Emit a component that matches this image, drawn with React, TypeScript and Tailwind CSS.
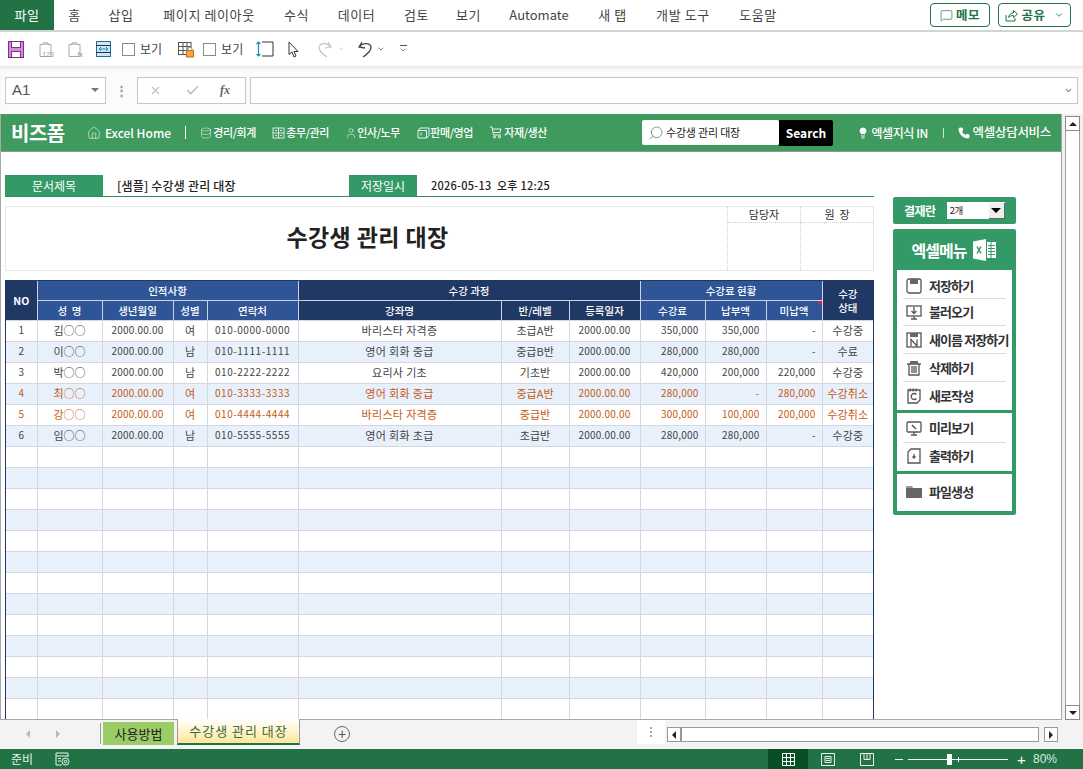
import { Home, Database, User, Search, Lightbulb, Phone, MessageSquare, X, Check, ChevronDown } from 'lucide-react';

const KR = "font-['Noto_Sans_CJK_KR','Noto_Sans',sans-serif]";

const tabs = [
  ['홈', 'ml-[15px] w-[11px]'],
  ['삽입', 'ml-[29px] w-[24px]'],
  ['페이지 레이아웃', 'ml-[28px] w-[96px]'],
  ['수식', 'ml-[27px] w-[25px]'],
  ['데이터', 'ml-[29px] w-[37px]'],
  ['검토', 'ml-[29px] w-[25px]'],
  ['보기', 'ml-[27px] w-[25px]'],
  ['Automate', 'ml-[29px] w-[58px] !tracking-normal'],
  ['새 탭', 'ml-[30px] w-[29px]'],
  ['개발 도구', 'ml-[28px] w-[56px]'],
  ['도움말', 'ml-[28px] w-[38px]'],
];

const rows = [
  ['1', '김○○', '2000.00.00', '여', '010-0000-0000', '바리스타 자격증', '초급A반', '2000.00.00', '350,000', '350,000', '-', '수강중'],
  ['2', '이○○', '2000.00.00', '남', '010-1111-1111', '영어 회화 중급', '중급B반', '2000.00.00', '280,000', '280,000', '-', '수료'],
  ['3', '박○○', '2000.00.00', '남', '010-2222-2222', '요리사 기초', '기초반', '2000.00.00', '420,000', '200,000', '220,000', '수강중'],
  ['4', '최○○', '2000.00.00', '여', '010-3333-3333', '영어 회화 중급', '중급A반', '2000.00.00', '280,000', '-', '280,000', '수강취소'],
  ['5', '강○○', '2000.00.00', '여', '010-4444-4444', '바리스타 자격증', '중급반', '2000.00.00', '300,000', '100,000', '200,000', '수강취소'],
  ['6', '임○○', '2000.00.00', '남', '010-5555-5555', '영어 회화 초급', '초급반', '2000.00.00', '280,000', '280,000', '-', '수강중'],
  ...Array.from({ length: 13 }, () => ['', '', '', '', '', '', '', '', '', '', '', '']),
];

// per column text style of the body cells
const cellText = [
  'text-center',
  'text-center text-[11px]',
  'text-center tracking-[0.2px]',
  'text-center text-[11px]',
  'text-center tracking-[0.55px]',
  'text-center text-[11px] tracking-[0.35px]',
  'text-center text-[11px]',
  'text-center tracking-[0.2px]',
  'text-right pr-[6px] tracking-[0.2px]',
  'text-right pr-[6px] tracking-[0.2px]',
  'text-right pr-[6px] tracking-[0.2px]',
  'text-center text-[11px] tracking-[0.2px]',
];

function Doc({ label }: { label: string }) {
  return (
    <svg width="16" height="17" viewBox="0 0 16 17" fill="none">
      <path d="M2 3.500h3V2h5v1.500h3v12H2z" stroke="#a8a8a8" />
      <rect x="5" y="1" width="5" height="3" fill="#c8c8c8" />
      <text x="16" y="16" textAnchor="end" fontSize="7" fill="#9a9a9a" fontFamily="Liberation Sans, sans-serif">{label}</text>
    </svg>
  );
}

function NavGrid() {
  return (
    <svg className="shrink-0" width="13" height="12" viewBox="0 0 13 12" fill="none" stroke="white" strokeWidth="0.8">
      <rect x="1" y="1" width="11" height="10" />
      <path d="M6.500 1v10M1 6h11M3 3.500h2M8 3.500h2M3 8.500h2M8 8.500h2" />
    </svg>
  );
}

function NavBox() {
  return (
    <svg className="shrink-0" width="13" height="12" viewBox="0 0 13 12" fill="none" stroke="white" strokeWidth="0.9">
      <path d="M1 3.500h8.500v7.500H1zM1 3.500 3 1h9v7.500l-2.500 2.500M4 5.500v3" />
    </svg>
  );
}

function NavCart() {
  return (
    <svg className="shrink-0" width="14" height="13" viewBox="0 0 14 13" fill="none" stroke="white" strokeWidth="0.9">
      <path d="M1 1h2l1.500 8h7.500M4 3h8l-1 3.500H4.500" />
      <circle cx="5.500" cy="11" r="1" />
      <circle cx="10.500" cy="11" r="1" />
    </svg>
  );
}

function NavItem({ icon, label, className }: any) {
  return (
    <div className={`flex items-center justify-between font-medium text-white whitespace-nowrap ${className}`}>
      {icon}
      <span>{label}</span>
    </div>
  );
}

function MenuIcon({ kind }: { kind: string }) {
  const s = { stroke: '#555', strokeWidth: 1.3, fill: 'none' };
  return (
    <svg className="shrink-0" width="18" height="18" viewBox="0 0 18 18">
      {kind === 'save' && (
        <g>
          <rect x="2" y="2" width="14" height="14" rx="2" {...s} />
          <rect x="5" y="2" width="8" height="5" fill="#666" />
        </g>
      )}
      {kind === 'load' && (
        <g>
          <rect x="2" y="3" width="14" height="10" {...s} />
          <path d="M6 16h6M9 13v3M9 4v6M6.500 8 9 10.500 11.500 8" {...s} />
        </g>
      )}
      {kind === 'saveas' && (
        <g>
          <rect x="2" y="2" width="14" height="14" {...s} />
          <rect x="5" y="2" width="8" height="4" fill="#666" />
          <path d="M6 15V8.500L12 15V8.500" {...s} />
        </g>
      )}
      {kind === 'del' && (
        <g>
          <path d="M2 5h14M4 5v11h10V5M7 7v7M9 7v7M11 7v7" {...s} />
          <rect x="5" y="2" width="8" height="3" fill="#666" />
        </g>
      )}
      {kind === 'new' && (
        <g>
          <path d="M3 3h12v10l-3 3H3z" {...s} />
          <path d="M5 1.500v3M8 1.500v3M11 1.500v3M11.500 7.500a3 3 0 1 0 0 4" {...s} />
        </g>
      )}
      {kind === 'view' && (
        <g>
          <rect x="2" y="3" width="14" height="10" rx="1" {...s} />
          <path d="M6 16h6M9 13v3" {...s} />
          <path d="M7 6l4 4" stroke="#555" strokeWidth="1.600" />
        </g>
      )}
      {kind === 'print' && (
        <g>
          <path d="M6 2h9v14H3V5z" {...s} />
          <path d="M9 7v4M7.500 9.500 9 11l1.500-1.500" {...s} />
        </g>
      )}
      {kind === 'file' && (
        <g>
          <path d="M1 3h6l1 2H1z" fill="#9a9a9a" />
          <rect x="1" y="5" width="16" height="10" fill="#666" />
        </g>
      )}
    </svg>
  );
}

function MenuRow({ kind, label, line, className }: any) {
  return (
    <div className={`mx-[6px] flex items-center gap-[6px] pl-[2px] ${line ? 'border-b border-[#dcdcdc]' : ''} ${className}`}>
      <MenuIcon kind={kind} />
      <span className="text-[13px] font-semibold text-[#333] tracking-[-0.9px] whitespace-nowrap">{label}</span>
    </div>
  );
}

export default function App() {
  return (
    <div className={`w-[1083px] h-[769px] overflow-hidden bg-white flex flex-col ${KR}`}>
      {/* ribbon tabs */}
      <div className="h-[32px] shrink-0 flex items-start border-b-2 border-[#d4d4d4] text-[13px] text-[#444]">
        <div className="w-[54px] h-[30px] bg-[#217346] text-white flex items-center justify-center tracking-[0.5px]">파일</div>
        {tabs.map(([t, c]) => (
          <div key={t} className={`h-[30px] flex items-center justify-center whitespace-nowrap tracking-[0.6px] ${c}`}>{t}</div>
        ))}
        <div className="ml-auto mr-[12px] mt-[3px] flex gap-[8px]">
          <div className="w-[60px] h-[24px] border border-[#217346] rounded-[4px] flex items-center justify-center gap-[3px] text-[12.500px] font-bold text-[#217346] tracking-[0.5px]">
            <MessageSquare size={13} strokeWidth={1.300} />메모
          </div>
          <div className="w-[73px] h-[24px] border border-[#217346] rounded-[4px] flex items-center justify-center gap-[3px] text-[12.500px] font-bold text-[#217346] tracking-[0.5px]">
            <svg width="13" height="13" viewBox="0 0 13 13" fill="none" stroke="#217346" strokeWidth="1">
              <path d="M1 6v6h9V9M3.500 8.500C4 5.500 6 4 8.500 4V1.500L12.500 5 8.500 8.500V6.500C6.500 6.500 5 7 3.500 8.500z" />
            </svg>
            공유<ChevronDown size={10} className="ml-[5px]" />
          </div>
        </div>
      </div>

      {/* quick access */}
      <div className="h-[34px] shrink-0 flex items-center pl-[8px] text-[12px] text-[#444]">
        <svg width="16" height="17" viewBox="0 0 16 17">
          <rect x="0.500" y="0.500" width="15" height="16" fill="#d68bd6" stroke="#7b2d8b" />
          <rect x="3.500" y="0.500" width="9" height="6" fill="#fff" stroke="#7b2d8b" />
          <rect x="3.500" y="10.500" width="9" height="6" fill="#fff" stroke="#7b2d8b" />
        </svg>
        <div className="ml-[14px]"><Doc label="123" /></div>
        <div className="ml-[13px]"><Doc label="fx" /></div>
        <svg className="ml-[13px]" width="15" height="16" viewBox="0 0 15 16" fill="none">
          <rect x="0.500" y="0.500" width="14" height="15" fill="#cde6f5" stroke="#1e6e9e" />
          <path d="M0 4.500h15M0 11.500h15" stroke="#333" />
          <path d="M3 8h9M5 6 3 8l2 2M10 6l2 2-2 2" stroke="#1e8bc3" />
        </svg>
        <div className="ml-[11px] w-[13px] h-[13px] border border-[#8a8a8a] bg-white" />
        <span className="ml-[5px]">보기</span>
        <svg className="ml-[15px]" width="17" height="17" viewBox="0 0 17 17" fill="none">
          <path d="M1 1.500h13M1 5.500h13M1 9.500h9M1 13.500h8M1.500 1v13M6 1v13M10 1v8M14 1v6" stroke="#555" />
          <rect x="9.500" y="9.500" width="7" height="6.500" fill="#f0a93c" stroke="#b87414" />
          <path d="M11 9.500V8a2 2 0 0 1 4 0v1.500" stroke="#888" />
        </svg>
        <div className="ml-[9px] w-[13px] h-[13px] border border-[#8a8a8a] bg-white" />
        <span className="ml-[5px]">보기</span>
        <svg className="ml-[13px]" width="18" height="18" viewBox="0 0 18 18" fill="none">
          <path d="M6 2h11v14H6" stroke="#333" />
          <path d="M2.500 2v14M0.500 4l2-2 2 2M0.500 14l2 2 2-2" stroke="#1e8bc3" strokeWidth="1.200" />
        </svg>
        <svg className="ml-[14px]" width="11" height="17" viewBox="0 0 11 17" fill="none" stroke="#333">
          <path d="M1 1v12.500l3-2.500 2 5 2-1-2-4.500h4z" />
        </svg>
        <svg className="ml-[16px]" width="18" height="18" viewBox="0 0 18 18" fill="none" stroke="#c4c4c4" strokeWidth="1.200">
          <path d="M13 2l3 5-6 1M15.500 7C13 3 5 2 4 7c-.500 4 5 8 8 10" />
        </svg>
        <ChevronDown className="ml-[4px] text-[#bdbdbd]" size={8} />
        <svg className="ml-[12px]" width="18" height="18" viewBox="0 0 18 18" fill="none" stroke="#444" strokeWidth="1.300">
          <path d="M5 2 2 7l6 1M2.500 7C5 3 13 2 14 7c.500 4-5 8-8 10" />
        </svg>
        <ChevronDown className="ml-[2px] text-[#444]" size={8} />
        <div className="ml-[14px] flex flex-col items-center gap-[2px]">
          <div className="w-[7px] h-px bg-[#555]" />
          <ChevronDown className="text-[#555] -mt-[2px]" size={8} />
        </div>
      </div>

      {/* formula bar */}
      <div className="h-[48px] shrink-0 bg-[#fbfbfb] border-t border-[#ececec] shadow-[inset_0_2px_2px_#eeeeee] flex items-center pl-[5px] pr-[5px] pb-[1px]">
        <div className="w-[101px] h-[27px] bg-white border border-[#c6c6c6] flex items-center pl-[6px] pr-[6px] text-[15px] text-[#555] font-['Liberation_Sans',sans-serif]">
          A1
          <div className="ml-auto w-0 h-0 border-x-[4px] border-x-transparent border-t-[4px] border-t-[#777]" />
        </div>
        <div className="w-[31px] flex justify-center text-[#999] text-[13px] font-bold">⋮</div>
        <div className="w-[109px] h-[27px] bg-white border border-[#c6c6c6] flex items-center text-[#bdbdbd]">
          <X className="ml-[11px]" size={13} strokeWidth={2} />
          <Check className="ml-[23px]" size={15} strokeWidth={2.500} />
          <span className="ml-[20px] text-[12px] italic font-bold text-[#666] font-['Liberation_Serif',serif]">fx</span>
        </div>
        <div className="ml-[4px] flex-1 h-[27px] bg-white border border-[#c6c6c6] flex items-center justify-end pr-[4px]">
          <ChevronDown className="text-[#888]" size={9} strokeWidth={3} />
        </div>
      </div>

      {/* sheet area */}
      <div className="h-[606px] shrink-0 flex">
        <div className="w-[1062px] border-l border-r border-b border-[#a8a8a8] flex flex-col overflow-hidden">
          <div className="h-[38px] shrink-0 bg-[#3f9a5d] border-b border-[#8a9a8f] flex items-center text-white text-[11px] tracking-[-0.4px]">
            <span className="ml-[10px] w-[76px] text-[20px] font-bold leading-none tracking-[-0.5px]">비즈폼</span>
            <NavItem className="w-[84px] !text-[12px] tracking-normal" icon={<Home size={14} strokeWidth={1} />} label="Excel Home" />
            <div className="ml-[14px] w-px h-[13px] bg-white" />
            <NavItem className="ml-[14px] w-[56px]" icon={<Database size={12} strokeWidth={1} />} label="경리/회계" />
            <NavItem className="ml-[16px] w-[57px]" icon={<NavGrid />} label="총무/관리" />
            <NavItem className="ml-[16px] w-[55px]" icon={<User size={12} strokeWidth={1} />} label="인사/노무" />
            <NavItem className="ml-[17px] w-[56px]" icon={<NavBox />} label="판매/영업" />
            <NavItem className="ml-[16px] w-[58px]" icon={<NavCart />} label="자재/생산" />
            <div className="ml-[95px] w-[137px] h-[25px] bg-white rounded-[2px] flex items-center pl-[6px] text-[11px] text-[#222] tracking-[-0.2px]">
              <Search size={16} strokeWidth={1} className="text-[#2e7d4f] -scale-x-100 mr-[2px]" />
              수강생 관리 대장
            </div>
            <div className="w-[54px] h-[26px] bg-black rounded-r-[2px] flex items-center justify-center text-[12px] font-bold tracking-normal">Search</div>
            <NavItem className="ml-[24px] w-[71px] !text-[12px]" icon={<Lightbulb size={12} strokeWidth={2} fill="white" />} label="엑셀지식 IN" />
            <div className="ml-[15px] w-px h-[10px] bg-[#cfe6d6]" />
            <NavItem className="ml-[14px] w-[93px] !text-[12.500px] tracking-[-0.3px]" icon={<Phone size={12} strokeWidth={2} fill="white" />} label="엑셀상담서비스" />
          </div>

          <div className="flex-1 min-h-0 flex">
            {/* left */}
            <div className="ml-[4px] w-[869px] flex flex-col">
              <div className="mt-[23px] h-[22px] shrink-0 flex items-center border-b border-[#3a8a5f] font-medium text-[#222]">
                <div className="w-[98px] h-full bg-[#339966] text-white font-normal text-[12px] flex items-center justify-center">문서제목</div>
                <span className="ml-[14px] w-[232px] text-[12px] tracking-[0.2px]">[샘플] 수강생 관리 대장</span>
                <div className="w-[68px] h-full bg-[#339966] text-white font-normal text-[12px] flex items-center justify-center">저장일시</div>
                <span className="ml-[14px] text-[11px] tracking-[0.25px] whitespace-pre">2026-05-13  오후 12:25</span>
              </div>

              <div className="mt-[9px] h-[65px] shrink-0 border border-[#e6e6e6] flex">
                <div className="flex-1 flex items-center justify-center pl-[2px] pb-[4px] text-[23px] font-bold text-[#222] tracking-[0.4px]">수강생 관리 대장</div>
                <div className="w-[73px] border-l border-dotted border-[#cccccc] flex flex-col">
                  <div className="h-[16px] border-b border-dotted border-[#cccccc] text-[11px] text-[#333] flex items-center justify-center">담당자</div>
                </div>
                <div className="w-[73px] border-l border-dotted border-[#cccccc] flex flex-col">
                  <div className="h-[16px] border-b border-dotted border-[#cccccc] text-[11px] text-[#333] flex items-center justify-center whitespace-pre">원  장</div>
                </div>
              </div>

              <div className="mt-[9px] border-x border-[#1f3864]">
                <table className="w-[867px] table-fixed border-collapse text-[10px] text-[#444]">
                  <colgroup>
                    <col className="w-[31px]" />
                    <col className="w-[65px]" />
                    <col className="w-[71px]" />
                    <col className="w-[34px]" />
                    <col className="w-[91px]" />
                    <col className="w-[203px]" />
                    <col className="w-[68px]" />
                    <col className="w-[71px]" />
                    <col className="w-[65px]" />
                    <col className="w-[61px]" />
                    <col className="w-[56px]" />
                    <col className="w-[51px]" />
                  </colgroup>
                  <thead className="text-white text-[10.500px]">
                    <tr className="h-[20px]">
                      <th rowSpan={2} className="bg-[#1f3864] border-t border-[#1f3864] font-bold">NO</th>
                      <th colSpan={4} className="bg-[#2f5597] border-l border-t border-[#c9d4e6] border-t-[#1f3864] font-medium">인적사항</th>
                      <th colSpan={3} className="bg-[#1f3864] border-l border-t border-[#c9d4e6] border-t-[#1f3864] font-medium">수강 과정</th>
                      <th colSpan={3} className="bg-[#2f5597] border-l border-t border-[#c9d4e6] border-t-[#1f3864] font-medium">수강료 현황</th>
                      <th rowSpan={2} className="bg-[#1f3864] border-l border-t border-[#c9d4e6] border-t-[#1f3864] font-medium leading-[14px]">수강<br />상태</th>
                    </tr>
                    <tr className="h-[20px]">
                      {['성  명', '생년월일', '성별', '연락처'].map((h) => (
                        <th key={h} className="bg-[#2f5597] border-l border-t border-[#c9d4e6] font-medium whitespace-pre">{h}</th>
                      ))}
                      {['강좌명', '반/레벨', '등록일자'].map((h) => (
                        <th key={h} className="bg-[#1f3864] border-l border-t border-[#c9d4e6] font-medium">{h}</th>
                      ))}
                      <th className="bg-[#2f5597] border-l border-t border-[#c9d4e6] font-medium">수강료</th>
                      <th className="bg-[#2f5597] border-l border-t border-[#c9d4e6] font-medium">납부액</th>
                      <th className="relative bg-[#2f5597] border-l border-t border-[#c9d4e6] font-medium">
                        미납액
                        <span className="absolute top-0 right-0 w-0 h-0 border-l-[5px] border-l-transparent border-t-[5px] border-t-[#e0203a]" />
                      </th>
                    </tr>
                  </thead>
                  <tbody>
                    {rows.map((r, i) => (
                      <tr key={i} className={`h-[21px] ${i % 2 === 1 ? 'bg-[#e8f0fc]' : 'bg-white'} ${i === 3 || i === 4 ? 'text-[#c55a11]' : ''}`}>
                        {r.map((c, j) => (
                          <td
                            key={j}
                            className={`border border-[#d4d8de] p-0 pb-[2px] leading-none overflow-hidden whitespace-nowrap first:border-l-0 last:border-r-0 ${cellText[j]}`}
                          >
                            {c}
                          </td>
                        ))}
                      </tr>
                    ))}
                  </tbody>
                </table>
              </div>
            </div>

            {/* right */}
            <div className="ml-[19px] w-[123px] flex flex-col pt-[45px]">
              <div className="h-[27px] bg-[#339966] rounded-[2px] flex items-center pl-[11px] text-white text-[12px] font-bold tracking-[-0.5px]">
                결재란
                <div className="ml-[11px] w-[58px] h-[17px] bg-white flex items-center text-[#222] text-[9.500px] font-normal pl-[3px]">
                  2개
                  <div className="ml-auto w-[16px] h-[16px] bg-[#eeeeee] border-r border-b border-[#666] flex items-center justify-center">
                    <div className="w-0 h-0 border-x-[5px] border-x-transparent border-t-[5px] border-t-black" />
                  </div>
                </div>
              </div>
              <div className="mt-[5px] h-[286px] bg-[#339966] rounded-[2px] flex flex-col px-[4px] pb-[4px]">
                <div className="h-[41px] shrink-0 flex items-center justify-center gap-[6px] text-white text-[16px] font-semibold tracking-[-1px]">
                  엑셀메뉴
                  <svg width="25" height="22" viewBox="0 0 23 22">
                    <path d="M0 2.500 13 0v22L0 19.500z" fill="white" />
                    <rect x="14" y="3" width="9" height="16" fill="white" />
                    <path d="M15 6.500h7M15 9.500h7M15 12.500h7M15 15.500h7M18 3v16" stroke="#339966" />
                    <path d="M4 7.500l4 7M8 7.500l-4 7" stroke="#339966" strokeWidth="1.500" />
                  </svg>
                </div>
                <div className="h-[140px] shrink-0 bg-white flex flex-col">
                  <MenuRow kind="save" label="저장하기" line className="h-[29px] pt-[3px]" />
                  <MenuRow kind="load" label="불러오기" line className="h-[27px]" />
                  <MenuRow kind="saveas" label="새이름 저장하기" line className="h-[28px]" />
                  <MenuRow kind="del" label="삭제하기" line className="h-[28px]" />
                  <MenuRow kind="new" label="새로작성" className="h-[27px]" />
                </div>
                <div className="mt-[3px] h-[58px] shrink-0 bg-white flex flex-col">
                  <MenuRow kind="view" label="미리보기" line className="h-[30px]" />
                  <MenuRow kind="print" label="출력하기" className="h-[25px]" />
                </div>
                <div className="mt-[3px] flex-1 bg-white flex flex-col">
                  <MenuRow kind="file" label="파일생성" className="h-[36px]" />
                </div>
              </div>
            </div>
          </div>
        </div>

        {/* vertical scrollbar */}
        <div className="flex-1 bg-[#f0f0f0] flex flex-col items-center pl-[3px] pr-[3px] pt-[2px]">
          <div className="w-[15px] h-[15px] bg-white border border-[#8a8a8a] flex items-center justify-center">
            <div className="w-0 h-0 border-x-[4px] border-x-transparent border-b-[4px] border-b-[#222]" />
          </div>
          <div className="w-[15px] flex-1 bg-white border-x border-[#a0a0a0]" />
          <div className="w-[15px] h-[15px] bg-white border border-[#8a8a8a] flex items-center justify-center">
            <div className="w-0 h-0 border-x-[4px] border-x-transparent border-t-[4px] border-t-[#222]" />
          </div>
        </div>
      </div>

      {/* sheet tabs */}
      <div className="h-[29px] shrink-0 bg-[#f3f3f3] flex items-start">
        <div className="ml-[26px] mt-[10px] w-0 h-0 border-y-[4px] border-y-transparent border-r-[4px] border-r-[#b8b8b8]" />
        <div className="ml-[26px] mt-[10px] w-0 h-0 border-y-[4px] border-y-transparent border-l-[4px] border-l-[#b8b8b8]" />
        <div className="ml-[40px] mt-[3px] w-px h-[21px] bg-[#9a9a9a]" />
        <div className="ml-[2px] mt-[2px] w-[71px] h-[23px] bg-[#9ccc65] flex items-center justify-center text-[13px] text-[#222]">사용방법</div>
        <div className="ml-[3px] -mt-px w-[123px] h-[26px] bg-gradient-to-b from-white to-[#ffe699] border-x border-[#9a9a9a] border-b-2 border-b-[#217346] flex items-center justify-center text-[13px] text-[#3a6b35] tracking-[1px] whitespace-nowrap">수강생 관리 대장</div>
        <div className="ml-[34px] mt-[6px] w-[16px] h-[16px] rounded-full border border-[#666] flex items-center justify-center text-[#555] text-[14px] leading-none font-['Liberation_Sans',sans-serif]">+</div>
        <div className="ml-[287px] w-[28px] h-[24px] bg-white flex flex-col items-center justify-center gap-[2px]">
          <div className="w-[2px] h-[2px] bg-[#aaaaaa]" />
          <div className="w-[2px] h-[2px] bg-[#aaaaaa]" />
          <div className="w-[2px] h-[2px] bg-[#aaaaaa]" />
        </div>
        <div className="ml-[2px] mt-[7px] h-[15px] w-[372px] bg-white border border-[#999] flex">
          <div className="w-[14px] bg-white border-r-2 border-[#999] flex items-center justify-center">
            <div className="w-0 h-0 border-y-[4px] border-y-transparent border-r-[4px] border-r-[#222]" />
          </div>
        </div>
        <div className="ml-[5px] mt-[7px] w-[14px] h-[15px] bg-white border border-[#999] flex items-center justify-center">
          <div className="w-0 h-0 border-y-[4px] border-y-transparent border-l-[4px] border-l-[#222]" />
        </div>
      </div>

      {/* status bar */}
      <div className="h-[20px] shrink-0 bg-[#217346] flex items-center text-white text-[12px]">
        <span className="ml-[11px] w-[24px] text-[#e6efe9]">준비</span>
        <svg className="ml-[20px]" width="15" height="14" viewBox="0 0 15 14" fill="none" stroke="white" strokeWidth="0.900">
          <path d="M13 5V1H1v12h6M1 4h12M3 6.500h3M3 9h3" />
          <circle cx="10.500" cy="9.500" r="3.500" />
          <circle cx="10.500" cy="9.500" r="1.300" />
        </svg>
        <div className="ml-[698px] w-[40px] h-full bg-[#0a4f24] flex items-center justify-center">
          <svg width="13" height="13" viewBox="0 0 13 13" fill="none" stroke="white">
            <path d="M.5.500h12v12H.5zM.5 4.500h12M.5 8.500h12M4.500.500v12M8.500.500v12" />
          </svg>
        </div>
        <svg className="ml-[13px]" width="14" height="13" viewBox="0 0 14 13" fill="none" stroke="white">
          <path d="M.5.500h13v12H.5zM4 3.500h6v6H4zM5 5.500h4M5 7.500h4" strokeWidth="0.900" />
        </svg>
        <svg className="ml-[25px]" width="14" height="13" viewBox="0 0 14 13" fill="none" stroke="white">
          <path d="M.5.500h13v12H.5zM4 .500v6h6v-6M7 .500v6" strokeWidth="0.900" />
        </svg>
        <div className="ml-[21px] w-[8px] h-px bg-white" />
        <div className="relative ml-[5px] w-[100px] h-px bg-white">
          <div className="absolute left-[39px] -top-[5px] w-[5px] h-[11px] bg-white" />
          <div className="absolute left-[50px] -top-[2px] w-px h-[5px] bg-white" />
        </div>
        <span className="ml-[9px] w-[11px] text-[15px] font-light leading-none font-['Liberation_Sans',sans-serif]">+</span>
        <span className="ml-[5px] text-[12px] text-[#dfe9e2] font-['Liberation_Sans',sans-serif]">80%</span>
      </div>
    </div>
  );
}
